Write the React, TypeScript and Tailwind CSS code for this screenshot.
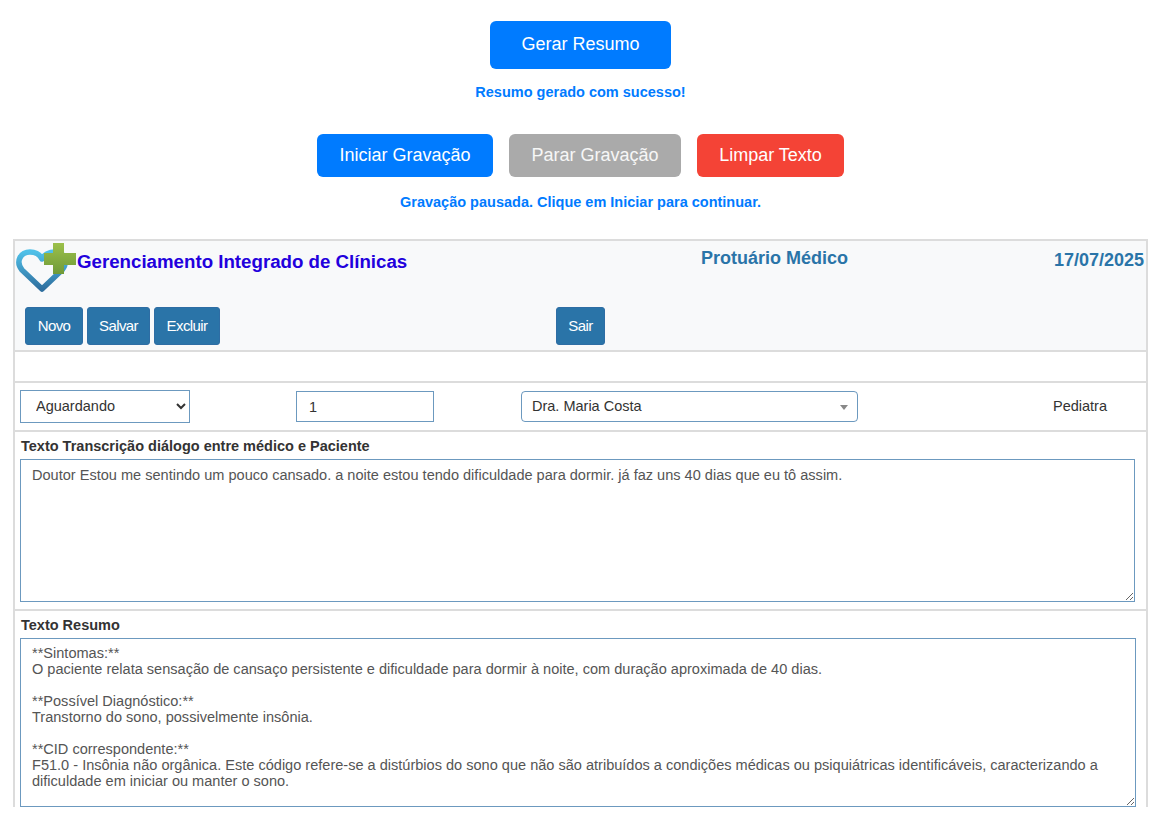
const font = "font-['Liberation_Sans',Arial,sans-serif]";

function Logo() {
  return (
    <svg width="62" height="54" viewBox="0 0 62 54" className="shrink-0">
      <defs>
        <linearGradient id="heart" x1="0" y1="0" x2="0" y2="1">
          <stop offset="0" stopColor="#4fc0e8" />
          <stop offset="1" stopColor="#2f6f9f" />
        </linearGradient>
        <linearGradient id="plus" x1="0" y1="0" x2="0" y2="1">
          <stop offset="0" stopColor="#9cc04a" />
          <stop offset="1" stopColor="#6f9a38" />
        </linearGradient>
      </defs>
      <path
        d="M26 47 L6 28 C-1 19 5 10 14 10 C20 10 24 13 26 17 C28 13 33 10 39 10 C48 10 53 19 46 28 Z"
        fill="none"
        stroke="url(#heart)"
        strokeWidth="5.5"
        strokeLinejoin="round"
      />
      <path d="M37 1 H48 V11 H60 V23 H48 V32 H37 V23 H28 V11 H37 Z" fill="url(#plus)" />
    </svg>
  );
}

function BarButton({ label, className = "" }: { label: string; className?: string }) {
  return (
    <button className={`h-[38px] rounded-[3px] border border-[#2e6da4] bg-[#2a74a8] text-[15px] tracking-[-0.6px] text-white ${className}`}>
      {label}
    </button>
  );
}

const transcricao =
  "Doutor Estou me sentindo um pouco cansado. a noite estou tendo dificuldade para dormir. já faz uns 40 dias que eu tô assim.";

const resumo = `**Sintomas:**
O paciente relata sensação de cansaço persistente e dificuldade para dormir à noite, com duração aproximada de 40 dias.

**Possível Diagnóstico:**
Transtorno do sono, possivelmente insônia.

**CID correspondente:**
F51.0 - Insônia não orgânica. Este código refere-se a distúrbios do sono que não são atribuídos a condições médicas ou psiquiátricas identificáveis, caracterizando a dificuldade em iniciar ou manter o sono.`;

export default function App() {
  return (
    <div className={`${font} h-screen overflow-hidden bg-white`}>
      <div className="flex flex-col items-center pt-[21px] pr-[10px]">
        <button className="h-[48px] w-[181px] rounded-[6px] bg-[#007bff] pb-[2px] text-[18px] text-white">Gerar Resumo</button>
        <p className="mt-[14px] h-[18px] text-[14.5px] leading-[18px] font-bold text-[#007bff]">Resumo gerado com sucesso!</p>
        <div className="mt-[33px] flex gap-[16px]">
          <button className="h-[43px] w-[176px] rounded-[6px] bg-[#007bff] text-[18px] text-white">Iniciar Gravação</button>
          <button className="h-[43px] w-[172px] rounded-[6px] bg-[#aaaaaa] text-[18px] text-white/90">Parar Gravação</button>
          <button className="h-[43px] w-[147px] rounded-[6px] bg-[#f44336] text-[18px] text-white">Limpar Texto</button>
        </div>
        <p className="mt-[16px] h-[18px] text-[14.5px] leading-[18px] font-bold text-[#007bff]">Gravação pausada. Clique em Iniciar para continuar.</p>
      </div>

      <div className="mx-[13px] mt-[28px] w-[1135px] border-x-2 border-t-2 border-[#dcdcdc]">
        <div className="h-[111px] border-b-2 border-[#dcdcdc] bg-[#f8f9fa]">
          <div className="flex h-[66px] items-start">
            <div className="flex w-[630px] items-start pl-[1px] pt-[1px]">
              <Logo />
              <span className="mt-[8px] -ml-[1px] whitespace-nowrap text-[18.7px] leading-[24px] font-bold text-[#2200dd]">Gerenciamento Integrado de Clínicas</span>
            </div>
            <span className="ml-[56px] mt-[5px] whitespace-nowrap text-[18px] leading-[24px] font-bold text-[#2a74a8]">Protuário Médico</span>
            <span className="ml-auto mr-[2px] mt-[7px] text-[18px] leading-[24px] font-bold text-[#2a74a8]">17/07/2025</span>
          </div>
          <div className="flex gap-[4px] pl-[10px]">
            <BarButton label="Novo" className="w-[58px]" />
            <BarButton label="Salvar" className="w-[63px]" />
            <BarButton label="Excluir" className="w-[66px]" />
            <BarButton label="Sair" className="ml-[332px] w-[49px]" />
          </div>
        </div>

        <div className="h-[31px] border-b-2 border-[#dcdcdc]" />

        <div className="flex h-[49px] items-center border-b-2 border-[#dcdcdc] pl-[5px] text-[14.5px] text-[#333333]">
          <select defaultValue="Aguardando" className="h-[33px] w-[170px] border border-[#2e6da4]/70 bg-white pb-[2px] pl-[11px] outline-none">
            <option>Aguardando</option>
          </select>
          <input defaultValue="1" className="ml-[106px] h-[31px] w-[138px] border border-[#2e6da4]/70 px-[12px] outline-none" />
          <div className="ml-[87px] flex h-[31px] w-[337px] items-center justify-between rounded-[4px] border border-[#2e6da4]/70 pl-[10px] pr-[9px] pt-[1px]">
            <span>Dra. Maria Costa</span>
            <span className="h-0 w-0 border-x-[4px] border-t-[5px] border-x-transparent border-t-[#888888]" />
          </div>
          <span className="ml-[195px]">Pediatra</span>
        </div>

        <div className="h-[179px] border-b-2 border-[#dcdcdc] px-[5px]">
          <label className="block h-[27px] pl-[1px] pt-[5px] text-[14.5px] leading-[18px] font-bold text-[#333333]">Texto Transcrição diálogo entre médico e Paciente</label>
          <textarea
            defaultValue={transcricao}
            className="block h-[143px] w-[1115px] border border-[#2e6da4]/70 px-[11px] pt-[7px] text-[14.55px] leading-[16px] text-[#555555] outline-none"
          />
        </div>

        <div className="px-[5px]">
          <label className="block h-[27px] pl-[1px] pt-[5px] text-[14.5px] leading-[18px] font-bold text-[#333333]">Texto Resumo</label>
          <textarea
            defaultValue={resumo}
            className="block h-[169px] w-[1116px] border border-[#2e6da4]/70 px-[11px] pt-[6px] text-[14.55px] leading-[16px] text-[#555555] outline-none"
          />
        </div>
      </div>
    </div>
  );
}
